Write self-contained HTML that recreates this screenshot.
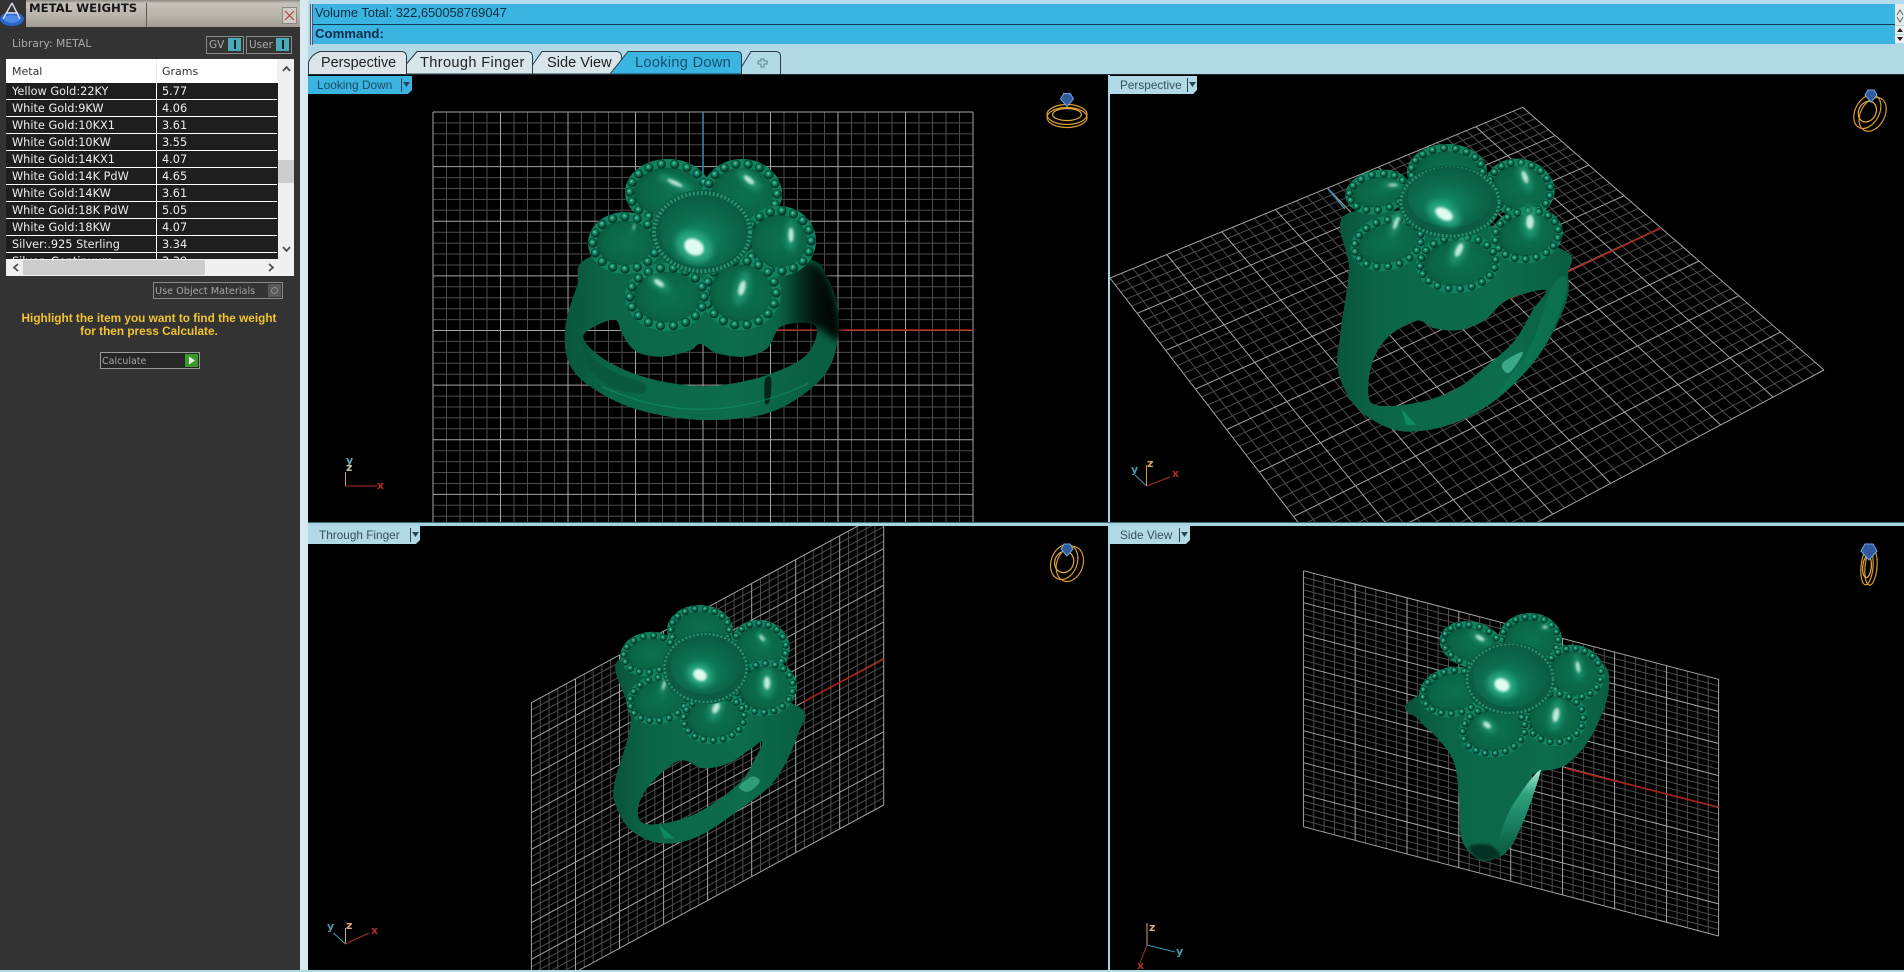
<!DOCTYPE html>
<html><head><meta charset="utf-8"><title>Metal Weights</title>
<style>
html,body{margin:0;padding:0;width:1904px;height:970px;overflow:hidden;background:#b2d9e6}
.a{position:absolute;white-space:nowrap}
#panel{left:0;top:0;width:300px;height:970px;background:#333;overflow:hidden;font-family:"DejaVu Sans","Liberation Sans",sans-serif}
#strip{left:300px;top:0;width:8px;height:970px;background:#d8eaf1}
.r{position:absolute;left:6px;width:271px;height:16px;background:#1e1e1e;border-bottom:1px solid #fff;color:#eee;font-size:11.3px;line-height:18px}
.r i{position:absolute;font-style:normal;left:6px;top:0}
.r b{position:absolute;font-weight:normal;left:156px;top:0;border-left:1px solid #fff;padding-left:5px;height:17px;width:100px}
.tab{font-family:"Liberation Sans",sans-serif;font-size:14.6px;line-height:18px;color:#222}
.vl{font-family:"Liberation Sans",sans-serif;font-size:11.8px;line-height:19px;color:#36505c}
.ax{font-family:"DejaVu Sans",sans-serif;font-size:11px;line-height:11px;font-weight:bold}
</style></head><body>
<svg id="s" class="a" style="left:0;top:0" width="1904" height="970" viewBox="0 0 1904 970" xmlns="http://www.w3.org/2000/svg">
<defs>
<radialGradient id="gb" cx=".42" cy=".38" r=".62"><stop offset="0" stop-color="#8ae4c6"/><stop offset=".2" stop-color="#22a47e"/><stop offset=".6" stop-color="#0a6248"/><stop offset="1" stop-color="#032c20"/></radialGradient>
<radialGradient id="gp" cx=".55" cy=".5" r=".62"><stop offset="0" stop-color="#0c7150"/><stop offset=".7" stop-color="#0a6646"/><stop offset="1" stop-color="#075238"/></radialGradient>
<radialGradient id="gd" cx=".45" cy=".62" r=".65"><stop offset="0" stop-color="#13906a"/><stop offset=".5" stop-color="#0c6e4e"/><stop offset="1" stop-color="#0a5a40"/></radialGradient>
<linearGradient id="gsh" x1="0" x2="1" y1="0" y2="0"><stop offset="0" stop-color="#000" stop-opacity="0"/><stop offset=".55" stop-color="#000" stop-opacity=".8"/><stop offset="1" stop-color="#000"/></linearGradient>
<linearGradient id="gbd" x1="0" x2="0" y1="0" y2="1"><stop offset="0" stop-color="#a8f0d8"/><stop offset=".3" stop-color="#2da27e"/><stop offset="1" stop-color="#0a5c42"/></linearGradient>
<filter id="b3" x="-80%" y="-80%" width="260%" height="260%"><feGaussianBlur stdDeviation="3"/></filter>
<filter id="b1" x="-80%" y="-80%" width="260%" height="260%"><feGaussianBlur stdDeviation="1.3"/></filter>
<filter id="b4" x="-30%" y="-30%" width="160%" height="160%"><feGaussianBlur stdDeviation="4"/></filter>
<clipPath id="c0"><rect x="308" y="75" width="800" height="447"/></clipPath>
<clipPath id="c1"><rect x="1110" y="75" width="794" height="447"/></clipPath>
<clipPath id="c2"><rect x="308" y="526" width="800" height="444"/></clipPath>
<clipPath id="c3"><rect x="1110" y="526" width="794" height="444"/></clipPath>
</defs>
<rect x="300" y="0" width="1604" height="970" fill="#b2d9e6"/>
<rect x="308" y="75" width="1596" height="895" fill="#000"/>
<rect x="1108" y="75" width="2" height="895" fill="#a8d4e2"/>
<rect x="308" y="522" width="1596" height="4" fill="#a8d4e2"/>
<rect x="308" y="522" width="1596" height="1" fill="#3a6a7a"/>
<g id="scene"></g>
<!-- top bars -->
<rect x="300" y="0" width="1604" height="4" fill="#b4dcea"/>
<rect x="312" y="4" width="1583" height="40" fill="#3ab4e1"/>
<rect x="312" y="24" width="1583" height="1" fill="#123c52"/>
<rect x="310" y="4" width="1" height="41" fill="#556"/><rect x="312" y="4" width="1" height="41" fill="#556"/>
<rect x="1895" y="4" width="9" height="21" fill="#e8e8e8"/><rect x="1895" y="26" width="9" height="8" fill="#eee"/><rect x="1895" y="35" width="9" height="8" fill="#eee"/>
<path d="M1897 15l3-5 3 5M1897 17l3 5 3-5" fill="none" stroke="#666"/>
<path d="M1897 32l3-4 3 4zM1897 37l3 4 3-4z" fill="#222"/>
<!-- tabs -->
<g stroke="#2a3c44" stroke-width="1">
<path d="M308.500 74V62Q312 54 320 51.500H402Q406 52 406.500 56V74" fill="#dce6ea"/>
<path d="M406.500 64L417 51.500H528Q532 52 532.500 56V74H406.500Z" fill="#d8e5ea"/>
<path d="M532.500 65L542 51.500H617Q621 52 621.500 56V65L612 74H532.500Z" fill="#d8e5ea"/>
<path d="M610 74L628 51.500H738Q741.500 52 741.500 56V74Z" fill="#3ab4e1"/>
<path d="M741.500 67L751 51.500H776Q780.500 52 780.500 56V74" fill="#b2d9e6"/>
</g>
<path d="M760 60h3v-2h3v2h3v3h-3v3h-3v-3h-3z" transform="translate(-2,1)" fill="none" stroke="#60808c"/>
<rect x="308" y="74" width="1596" height="1" fill="#1c2c34"/>
<!-- viewport labels -->
<path d="M308 76H412V90L408 94H308Z" fill="#3ab4e1"/>
<path d="M1110 76H1197V90L1193 94H1110Z" fill="#b2d9e6"/>
<path d="M308 526H420V540L416 544H308Z" fill="#b2d9e6"/>
<path d="M1110 526H1190V540L1186 544H1110Z" fill="#b2d9e6"/>
<g fill="#2a4450"><rect x="401" y="78" width="1" height="14"/><rect x="1187" y="78" width="1" height="14"/><rect x="410" y="528" width="1" height="14"/><rect x="1179" y="528" width="1" height="14"/>
<path d="M403 82h7l-3.500 5zM1189 82h7l-3.500 5zM412 532h7l-3.500 5zM1181 532h7l-3.500 5z"/></g>
<!-- axis gizmos -->
<g fill="none" stroke-width="1">
<path d="M345.500 486V472" stroke="#c8a878"/><path d="M345.500 486H377" stroke="#a83020"/>
<path d="M1146.500 486V465" stroke="#c8983c"/><path d="M1146.500 486L1135 475" stroke="#3a9ab0"/><path d="M1146.500 486L1170 477" stroke="#a83020"/>
<path d="M345.500 944V928" stroke="#c8a878"/><path d="M345.500 944L333.500 933" stroke="#3a9ab0"/><path d="M345.500 944L369 933" stroke="#a83020"/>
<path d="M1147 945V923" stroke="#c8a878"/><path d="M1147 945L1175 952" stroke="#3a9ab0"/><path d="M1147 945L1140 963" stroke="#a83020"/>
</g>
</svg>

<div id="strip" class="a"></div>
<div id="panel" class="a">
  <div class="a" style="left:0;top:0;width:300px;height:27px;background:linear-gradient(#8a8880 0,#c6c2ba 12%,#b8b4ac 60%,#a09c94 100%)"></div>
  <div class="a" style="left:146px;top:3px;width:1px;height:24px;background:#5c5a54"></div>
  <div class="a" style="left:29px;top:1px;font-size:11.7px;line-height:14px;font-weight:bold;color:#161616">METAL WEIGHTS</div>
  <svg class="a" style="left:0;top:0" width="26" height="27"><rect width="26" height="27" fill="#333"/><ellipse cx="12" cy="19" rx="12" ry="7" fill="#2a62c8"/><ellipse cx="12" cy="19" rx="8" ry="4" fill="#4a8ae8"/><path d="M12 3L3 19M12 3L20 19M6 13H18" stroke="#dde" stroke-width="1.400" fill="none"/></svg>
  <svg class="a" style="left:282px;top:7px" width="15" height="17"><rect x=".5" y=".5" width="14" height="16" fill="#d0ccc6" stroke="#888"/><path d="M3 4L12 13M12 4L3 13" stroke="#b84040" stroke-width="1.200"/></svg>

  <div class="a" style="left:12px;top:37px;font-size:10.8px;line-height:14px;color:#aaa">Library: METAL</div>

  <div class="a" style="left:206px;top:36px;width:36px;height:16px;border:1px solid #8a8a8a"></div>
  <div class="a" style="left:209px;top:38px;font-size:10.5px;line-height:14px;color:#aaa">GV</div>
  <div class="a" style="left:228px;top:38px;width:13px;height:13px;background:#4ba9b9"></div>
  <div class="a" style="left:234px;top:40px;width:2px;height:9px;background:#10242a"></div>
  <div class="a" style="left:246px;top:36px;width:44px;height:16px;border:1px solid #8a8a8a"></div>
  <div class="a" style="left:249px;top:38px;font-size:10.5px;line-height:14px;color:#aaa">User</div>
  <div class="a" style="left:276px;top:38px;width:13px;height:13px;background:#4ba9b9"></div>
  <div class="a" style="left:282px;top:40px;width:2px;height:9px;background:#10242a"></div>

  <div class="a" style="left:6px;top:59px;width:288px;height:217px;background:#f0f0f0;overflow:hidden">
    <div class="a" style="left:0;top:0;width:271px;height:24px;background:#fff;color:#333;font-size:11px;line-height:26px"><span class="a" style="left:6px;top:0">Metal</span><span class="a" style="left:156px;top:0">Grams</span><span class="a" style="left:150px;top:0;width:1px;height:24px;background:#eee"></span></div>
    <div class="a" style="left:0;top:24px;width:272px;height:176px;overflow:hidden;background:#1e1e1e">
      <div class="r" style="left:0;top:0"><i>Yellow Gold:22KY</i><b style="left:150px">5.77</b></div>
      <div class="r" style="left:0;top:17px"><i>White Gold:9KW</i><b style="left:150px">4.06</b></div>
      <div class="r" style="left:0;top:34px"><i>White Gold:10KX1</i><b style="left:150px">3.61</b></div>
      <div class="r" style="left:0;top:51px"><i>White Gold:10KW</i><b style="left:150px">3.55</b></div>
      <div class="r" style="left:0;top:68px"><i>White Gold:14KX1</i><b style="left:150px">4.07</b></div>
      <div class="r" style="left:0;top:85px"><i>White Gold:14K PdW</i><b style="left:150px">4.65</b></div>
      <div class="r" style="left:0;top:102px"><i>White Gold:14KW</i><b style="left:150px">3.61</b></div>
      <div class="r" style="left:0;top:119px"><i>White Gold:18K PdW</i><b style="left:150px">5.05</b></div>
      <div class="r" style="left:0;top:136px"><i>White Gold:18KW</i><b style="left:150px">4.07</b></div>
      <div class="r" style="left:0;top:153px"><i>Silver:.925 Sterling</i><b style="left:150px">3.34</b></div>
      <div class="r" style="left:0;top:170px"><i>Silver: Continuum</i><b style="left:150px">3.39</b></div>
    </div>
    <div class="a" style="left:272px;top:101px;width:16px;height:23px;background:#cdcdcd"></div>
    <div class="a" style="left:17px;top:201px;width:182px;height:15px;background:#cdcdcd"></div>
    <svg class="a" style="left:0;top:0" width="288" height="217"><path d="M277 12l3.500-4 3.500 4M277 188l3.500 4 3.500-4M12 205l-4 3.500 4 3.500M263 205l4 3.500-4 3.500" fill="none" stroke="#505050" stroke-width="1.800"/></svg>
  </div>

  <div class="a" style="left:153px;top:282px;width:128px;height:15px;border:1px solid #8a8a8a"></div>
  <div class="a" style="left:155px;top:285px;font-size:9.7px;line-height:13px;color:#a6a6a6">Use Object Materials</div>
  <div class="a" style="left:268px;top:284px;width:13px;height:13px;background:#5a5a5a"></div>
  <div class="a" style="left:271px;top:287px;width:5px;height:5px;border:1px solid #8a8a8a;border-radius:50%"></div>

  <div class="a" style="left:0;top:312px;width:298px;text-align:center;font-family:'Liberation Sans',sans-serif;font-weight:bold;font-size:11.8px;line-height:13px;color:#f2c42e">Highlight the item you want to find the weight<br>for then press Calculate.</div>

  <div class="a" style="left:100px;top:352px;width:98px;height:15px;border:1px solid #9a9a9a;background:#262626"></div>
  <div class="a" style="left:102px;top:355px;font-size:9.5px;line-height:13px;color:#a6a6a6">Calculate</div>
  <div class="a" style="left:185px;top:354px;width:13px;height:13px;background:#3a9a2a"></div>
  <svg class="a" style="left:185px;top:354px" width="13" height="13"><path d="M4 2.500L10 6.500 4 10.500Z" fill="#f0f0f0"/></svg>
</div>

<!-- tab labels -->
<div class="a tab" style="left:321px;top:54px;font-size:14.4px">Perspective</div>
<div class="a tab" style="left:420px;top:54px;letter-spacing:.35px">Through Finger</div>
<div class="a tab" style="left:547px;top:54px">Side View</div>
<div class="a tab" style="left:635px;top:54px;color:#14506e;letter-spacing:.3px">Looking Down</div>

<div class="a" style="left:315px;top:4px;font-family:'Liberation Sans',sans-serif;font-size:12.9px;line-height:17px;color:#0e2c3c">Volume Total: 322,650058769047</div>
<div class="a" style="left:315px;top:25px;font-family:'Liberation Sans',sans-serif;font-size:13.2px;line-height:17px;font-weight:bold;color:#0e2c4c">Command:</div>

<div class="a vl" style="left:317px;top:76px;color:#1c4a60;font-size:11.9px">Looking Down</div>
<div class="a vl" style="left:1120px;top:76px">Perspective</div>
<div class="a vl" style="left:319px;top:526px">Through Finger</div>
<div class="a vl" style="left:1120px;top:526px">Side View</div>

<div class="a ax" style="left:346px;top:455px;color:#6aa6b8">y</div>
<div class="a ax" style="left:346px;top:462px;color:#c8c0a0">z</div>
<div class="a ax" style="left:377px;top:480px;color:#b02c20">x</div>
<div class="a ax" style="left:1147px;top:458px;color:#d8a860">z</div>
<div class="a ax" style="left:1131px;top:464px;color:#4a9ab0">y</div>
<div class="a ax" style="left:1172px;top:468px;color:#b02c20">x</div>
<div class="a ax" style="left:346px;top:920px;color:#d8a880">z</div>
<div class="a ax" style="left:327px;top:921px;color:#4a9ab0">y</div>
<div class="a ax" style="left:371px;top:925px;color:#b02c20">x</div>
<div class="a ax" style="left:1149px;top:922px;color:#d8a880">z</div>
<div class="a ax" style="left:1176px;top:946px;color:#4a9ab0">y</div>
<div class="a ax" style="left:1137px;top:960px;color:#b02c20">x</div>

<script>
(function(){
var h='';
function f(n){return Math.round(n*10)/10}
function quad(q){
  var x0=q[0][0],y0=q[0][1],x1=q[1][0],y1=q[1][1],x2=q[2][0],y2=q[2][1],x3=q[3][0],y3=q[3][1];
  var dx1=x1-x2,dx2=x3-x2,sx=x0-x1+x2-x3,dy1=y1-y2,dy2=y3-y2,sy=y0-y1+y2-y3;
  var den=dx1*dy2-dx2*dy1,g=(sx*dy2-dx2*sy)/den,k=(dx1*sy-sx*dy1)/den;
  var a=x1-x0+g*x1,b=x3-x0+k*x3,c=x0,d=y1-y0+g*y1,e=y3-y0+k*y3,ff=y0;
  function P(u,v){var w=g*u+k*v+1;return f((a*u+b*v+c)/w)+' '+f((d*u+e*v+ff)/w)}
  var mi='',ma='';
  for(var i=0;i<=40;i++){var u=i/40;var s='M'+P(u,0)+'L'+P(u,1)+'M'+P(0,u)+'L'+P(1,u);if(i%5==0)ma+=s;else mi+=s}
  return '<path d="'+mi+'" stroke="#4c4c4c" fill="none"/><path d="'+ma+'" stroke="#a4a4a4" fill="none"/>';
}
function cr(p){var n=p.length,d='M'+f(p[0][0])+' '+f(p[0][1]);
  for(var i=0;i<n;i++){var a=p[(i-1+n)%n],b=p[i],c=p[(i+1)%n],e=p[(i+2)%n];
    d+='C'+f(b[0]+(c[0]-a[0])/6)+' '+f(b[1]+(c[1]-a[1])/6)+' '+f(c[0]-(e[0]-b[0])/6)+' '+f(c[1]-(e[1]-b[1])/6)+' '+f(c[0])+' '+f(c[1])}
  return d+'Z'}
function Z(x0,y0,xs,p){return p.map(function(q){return [x0+q[0]/xs,y0+q[1]/3]})}
function petal(p,br,space){
  var cx=p[0],cy=p[1],rx=p[2],ry=p[3],rot=p[4]||0,s='<g transform="translate('+cx+' '+cy+') rotate('+rot+')">';
  s+='<ellipse rx="'+rx+'" ry="'+ry+'" fill="#0f8260"/>';
  var ix=rx-br*2,iy=ry-br*2;
  s+='<ellipse rx="'+f(ix)+'" ry="'+f(iy)+'" fill="url(#gp)"/>';
  var bx=rx-br-.5,by=ry-br-.5,L=2*Math.PI*Math.sqrt((bx*bx+by*by)/2),n=Math.round(L/space);
  for(var i=0;i<n;i++){var t=i/n*2*Math.PI;
    s+='<circle cx="'+f(bx*Math.cos(t))+'" cy="'+f(by*Math.sin(t))+'" r="'+br+'" fill="url(#gb)" stroke="#05382a" stroke-width=".6"/>'}
  return s+'</g>';
}
function hi(a,big){var cx=a[0],cy=a[1],rx=a[2],ry=a[3],rot=a[4]||0,t='translate('+cx+' '+cy+') rotate('+rot+')';
  return '<ellipse transform="'+t+'" rx="'+f(rx*1.5)+'" ry="'+f(ry*1.5)+'" fill="#2fb48c" opacity="'+(big?.75:.5)+'" filter="url(#b3)"/><ellipse transform="'+t+'" rx="'+f(rx*(big?.8:.65))+'" ry="'+f(ry*(big?.8:.65))+'" fill="#dffcf0" opacity="'+(big?1:.85)+'" filter="url(#b1)"/>';
}
function flower(v){
  var s='';
  v.petals.forEach(function(p){s+=petal(p,v.br,v.sp)});
  v.hi.forEach(function(a,i){if(i>0)s+=hi(a,false)});
  var d=v.dome;
  s+='<ellipse cx="'+d[4]+'" cy="'+d[5]+'" rx="'+d[6]+'" ry="'+d[7]+'" fill="#0b5c42" stroke="#0a5a40" stroke-width="'+v.rw+'"/>';
  s+='<ellipse cx="'+d[4]+'" cy="'+d[5]+'" rx="'+d[6]+'" ry="'+d[7]+'" fill="none" stroke="#2a9274" stroke-width="'+(v.rw-2)+'" stroke-dasharray="2 2"/>';
  s+='<ellipse cx="'+d[0]+'" cy="'+d[1]+'" rx="'+d[2]+'" ry="'+d[3]+'" fill="url(#gd)"/>';
  s+=hi(v.hi[0],true);
  return s;
}
function gizmo(cx,cy,rx,ry,rot,gx,gy,gs,ox,oy){
  var s='<g fill="none" stroke="#d89a30" stroke-width="1.200" transform="translate('+cx+' '+cy+') rotate('+rot+')">';
  s+='<ellipse cx="'+(-ox)+'" cy="'+(-oy)+'" rx="'+rx+'" ry="'+ry+'"/><ellipse cx="'+ox+'" cy="'+oy+'" rx="'+rx+'" ry="'+ry+'"/>';
  s+='<ellipse cx="'+(-ox)+'" cy="'+(-oy)+'" rx="'+f(rx*.72)+'" ry="'+f(ry*.6)+'" stroke="#e8ae44"/></g>';
  s+='<g fill="#2f5a9c" stroke="#7aa6e0" stroke-width="1"><path d="M'+(gx-gs)+' '+(gy-1)+'L'+(gx-gs*.5)+' '+(gy-gs)+'H'+(gx+gs*.5)+'L'+(gx+gs)+' '+(gy-1)+'L'+gx+' '+(gy+gs)+'Z"/></g>';
  return s;
}
var V=[
{clip:'c0',x0:400,y0:100,xs:2.178,
 q:[[433,112],[973,112],[973,549],[433,549]],
 axes:[['#2f86a8',703,112,703,190],['#a82418',703,330,973,330]],
 outer:[[415,470],[385,560],[360,680],[368,790],[420,865],[520,930],[660,960],[800,940],[900,860],[945,770],[955,640],[930,530],[880,470],[650,400]],
 hole:[[400,705],[435,672],[470,660],[485,705],[515,755],[570,770],[630,752],[655,732],[690,760],[750,770],[800,745],[832,678],[905,678],[885,765],[800,825],[700,855],[620,855],[530,830],[460,790],[415,745]],
 grad:[560,815],
 br:4.3,sp:11.5,rw:6,
 dome:[703,231,43,36,702,232,48,39],
 petals:[[668,192,43,33],[742,194,40,35],[779,241,37,35],[625,243,37,31],[741,293,40,37],[667,297,42,34]],
 hi:[[694,247,13,10,30],[675,183,13,3,25],[749,180,10,4,40],[791,235,4,11,0],[742,288,5,12,15],[659,283,9,4,35],[634,227,1,5,15]],
 giz:[1067,116,20,10,0,1067,100,6.5,0,1.5],
 extra:function(z){
   return '<path d="'+cr(z([[835,490],[900,490],[935,540],[955,640],[955,720],[905,680],[838,675],[825,600]]))+'" fill="url(#gsh)" filter="url(#b4)"/>'
   +'<path d="'+cr(z([[395,710],[420,770],[470,820],[530,850],[525,880],[460,860],[410,800]]))+'" fill="#09583e"/>'
   +'<path d="'+cr(z([[795,840],[808,835],[806,900],[795,908]]))+'" fill="#03241a"/>'
   +'<path d="M'+z([[440,860]])[0]+'Q'+z([[660,1000]])[0]+' '+z([[890,850]])[0]+'" fill="none" stroke="#109068" stroke-width="1.500" opacity=".6"/>';
 }},
{clip:'c1',x0:1110,y0:70,xs:1.975,
 q:[[1522.7,107.3],[1824,370],[1367.5,612.6],[1110,278]],
 axes:[['#2f8ea8',1328,189,1345,209],['#a82418',1661,228,1510,299]],
 outer:[[470,430],[472,600],[455,790],[450,900],[480,1000],[530,1060],[590,1085],[680,1060],[770,980],[850,850],[900,700],[905,610],[895,540],[700,450]],
 hole:[[605,752],[640,775],[690,780],[740,750],[785,690],[860,660],[835,720],[800,810],[750,880],[680,960],[600,1000],[525,1005],[510,960],[520,870],[550,800]],
 grad:[1335,1570],
 br:3.6,sp:10,rw:5,
 dome:[1450,197,42,30,1450,202,49,34],
 petals:[[1447,172,40,28,0],[1378,192,33,22,-10],[1520,188,35,29,15],[1527,235,36,28,-10],[1388,243,38,27,-15],[1458,263,42,30,-5]],
 hi:[[1444,214,12,7,30],[1525,177,4,10,-20],[1530,222,6,11,0],[1459,250,5,11,25],[1396,223,3,10,20],[1393,185,8,2,0]],
 giz:[1870,113,12,18,28,1871,96,6,3,0],
 extra:function(z){
   return '<path d="'+cr(z([[775,880],[815,845],[802,885],[785,910]]))+'" fill="#3aa886"/>'
   +'<path d="M'+z([[575,1015]])[0]+'L'+z([[605,1065]])[0]+'L'+z([[585,1065]])[0]+'Z" fill="#0f8a5c"/>'
   +'<path d="'+cr(z([[870,660],[900,620],[895,700],[850,850],[790,950],[770,960],[830,830]]))+'" fill="#0d7a56" opacity=".6"/>';
 }},
{clip:'c2',x0:300,y0:520,xs:1.936,
 q:[[531.4,702.7],[883.7,512],[883.7,805],[531.4,996]],
 axes:[['#a82418',803.6,701.7,883.7,659]],
 outer:[[618,420],[640,600],[610,780],[610,850],[640,930],[700,970],[770,950],[850,870],[920,780],[965,640],[965,560],[800,480]],
 hole:[[735,722],[780,745],[830,730],[870,690],[895,665],[880,720],[850,790],[780,870],[720,905],[665,910],[655,860],[680,790]],
 grad:[615,800],
 br:3.2,sp:9,rw:4.5,
 dome:[705.5,665,35,29,705.5,668,41,34],
 petals:[[700,630,33,25,0],[649,654,29,22,-10],[760,647,30,27,15],[765,688,32,28,-10],[659,699,33,25,-15],[714,718,34,26,-5]],
 hi:[[700,675,9,7,30],[762,638,6,2.5,50],[767,683,5,10,0],[716,708,5,9,25],[664,685,2,8,15]],
 giz:[1067,563,13,18,20,1067,550,6,3,0],
 extra:function(z){
   return '<path d="'+cr(z([[850,800],[875,770],[890,785],[868,815]]))+'" fill="#2f9c7a"/>'
   +'<path d="M'+z([[695,915]])[0]+'L'+z([[725,955]])[0]+'L'+z([[705,955]])[0]+'Z" fill="#0f8a5c"/>';
 }},
{clip:'c3',x0:1110,y0:520,xs:1.975,
 q:[[1303.4,570.7],[1718.6,679.3],[1718.6,936],[1303.4,826.7]],
 axes:[['#a82418',1565.7,768.3,1718.6,807.3]],
 outer:[[595,540],[610,600],[650,660],[680,730],[690,850],[695,960],[730,1020],[770,1010],[790,980],[810,900],[830,780],[850,755],[900,735],[950,650],[985,510],[960,420],[800,400]],
 hole:null,
 grad:[1410,1610],
 br:3.2,sp:9,rw:4.5,
 dome:[1510,676,37,31,1510,679,43,34],
 petals:[[1530,640,32,27,0],[1472,645,33,23,15],[1574,673,31,28,15],[1555,718,32,28,0],[1453,692,34,25,-10],[1494,730,35,27,-10]],
 hi:[[1502,685,10,8,30],[1480,638,8,3,30],[1545,627,4,2,0],[1578,667,3,9,-10],[1556,715,5,11,10],[1487,725,7,4,40]],
 giz:[1869,567,6,18,5,1869,552,8,2,0],
 extra:function(z){
   return '<path d="'+cr(z([[845,755],[825,790],[790,870],[770,950],[770,990],[790,985],[815,910],[835,830],[850,757]]))+'" fill="url(#gbd)"/>'
   +'<path d="'+cr(z([[710,980],[730,1020],[770,1010],[750,975]]))+'" fill="#041c14" opacity=".7" filter="url(#b1)"/>';
 }}
];
V.forEach(function(v,i){
  var z=function(p){return Z(v.x0,v.y0,v.xs,p)};
  h+='<g clip-path="url(#'+v.clip+')">';
  h+=quad(v.q);
  v.axes.forEach(function(a){h+='<path d="M'+a[1]+' '+a[2]+'L'+a[3]+' '+a[4]+'" stroke="'+a[0]+'" stroke-width="1.600" fill="none"/>'});
  var g='gs'+i;
  h+='<linearGradient id="'+g+'" gradientUnits="userSpaceOnUse" x1="'+v.grad[0]+'" x2="'+v.grad[1]+'" y1="0" y2="0"><stop offset="0" stop-color="#09543b"/><stop offset=".2" stop-color="#0b6648"/><stop offset=".7" stop-color="#0c6c4c"/><stop offset="1" stop-color="#0a5e42"/></linearGradient>';
  var d=cr(z(v.outer));
  if(v.hole)d+=cr(z(v.hole));
  h+='<path d="'+d+'" fill="url(#'+g+')" fill-rule="evenodd"/>';
  h+=v.extra(z);
  h+=flower(v);
  var gz=v.giz;
  h+=gizmo(gz[0],gz[1],gz[2],gz[3],gz[4],gz[5],gz[6],gz[7],gz[8],gz[9]);
  h+='</g>';
});
document.getElementById('scene').innerHTML=h;
})();
</script>
</body></html>
